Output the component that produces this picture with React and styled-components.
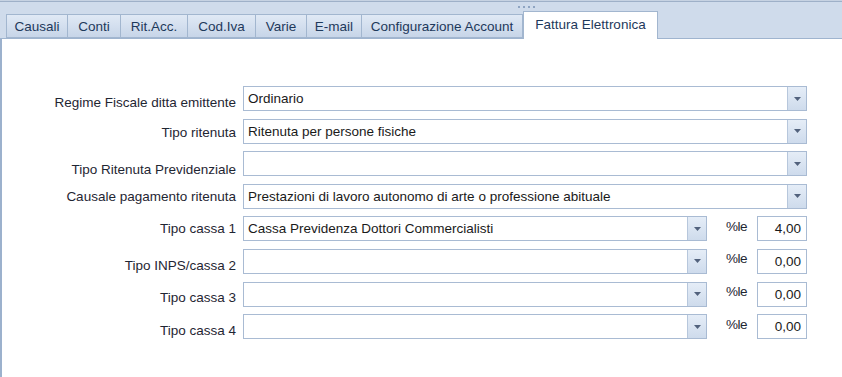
import React from "react";
import styled, { createGlobalStyle } from "styled-components";

const GlobalStyle = createGlobalStyle`
  html, body {
    margin: 0;
    padding: 0;
    background: #ffffff;
  }
  #root {
    height: 377px;
    overflow: hidden;
  }
`;

const Window = styled.div`
  height: 377px;
  display: flex;
  flex-direction: column;
  font-family: "Liberation Sans", Arial, sans-serif;
  font-size: 13.5px;
  color: #1f2633;
`;

const TabStrip = styled.div`
  position: relative;
  height: 39px;
  box-sizing: border-box;
  display: flex;
  align-items: flex-end;
  padding-left: 6px;
  background: #cfdbeb;
  border-bottom: 1px solid #9fb4cf;
  box-shadow: inset 0 1px #c6d2e2, inset 0 2px #9eb0c8;
`;

const Grip = styled.div`
  position: absolute;
  left: 518px;
  top: 6px;
  display: flex;
  gap: 3px;

  span {
    width: 2px;
    height: 2px;
    background: #8ea4c2;
  }
`;

const Tab = styled.div`
  box-sizing: border-box;
  width: ${(p) => p.$w}px;
  height: ${(p) => (p.$active ? 28 : 24)}px;
  margin-left: ${(p) => (p.$first || p.$active ? 0 : -1)}px;
  margin-bottom: ${(p) => (p.$active ? -1 : 0)}px;
  display: flex;
  align-items: center;
  justify-content: center;
  padding-top: ${(p) => (p.$active ? 0 : 1)}px;
  padding-bottom: ${(p) => (p.$active ? 3 : 0)}px;
  border: 1px solid #a2b6cf;
  border-bottom: ${(p) => (p.$active ? "none" : "1px solid #a2b6cf")};
  background: ${(p) =>
    p.$active ? "#ffffff" : "linear-gradient(#e0e9f5, #c7d5e8)"};
  color: #1e395b;
  white-space: nowrap;
  position: relative;
  z-index: ${(p) => (p.$active ? 2 : 1)};
`;

const Content = styled.div`
  flex: 1;
  background: #ffffff;
  border-left: 2px solid #9cb1cd;
  padding-top: 47px;
`;

const Form = styled.div`
  display: grid;
  grid-template-columns: 234px 564px;
  grid-auto-rows: 25px;
  column-gap: 7px;
  row-gap: 7.6px;
`;

const Label = styled.div`
  text-align: right;
  line-height: 16px;
  white-space: nowrap;
  padding-top: ${(p) => 4.5 + p.$drop}px;
  color: #1f2633;
`;

const Field = styled.div`
  display: flex;
  align-items: stretch;
  min-width: 0;
`;

const Combo = styled.div`
  box-sizing: border-box;
  width: ${(p) => (p.$w ? `${p.$w}px` : "100%")};
  height: 25px;
  display: flex;
  border: 1px solid #a9bbd3;
  background: #ffffff;
`;

const ComboText = styled.div`
  flex: 1;
  padding-left: 4px;
  line-height: 23px;
  white-space: nowrap;
  overflow: hidden;
  color: #1a1a1a;
`;

const DropButton = styled.div`
  width: 18px;
  display: flex;
  align-items: center;
  justify-content: center;
  border-left: 1px solid #b7c7dc;
  background: linear-gradient(#e5edf7, #cedbec);
`;

const Pct = styled.div`
  margin-left: 19px;
  width: 22px;
  line-height: 16px;
  padding-top: 2.5px;
  white-space: nowrap;
  letter-spacing: -0.5px;
  color: #1f2633;
`;

const NumberBox = styled.div`
  box-sizing: border-box;
  margin-left: auto;
  width: 50px;
  height: 25px;
  border: 1px solid #a9bbd3;
  padding-right: 5px;
  text-align: right;
  line-height: 23px;
  color: #1a1a1a;
`;

const Arrow = () => (
  <svg width="7" height="4" viewBox="0 0 7 4">
    <path d="M0 0h7L3.5 4z" fill="#52627d" />
  </svg>
);

const tabs = [
  { label: "Causali", w: 62 },
  { label: "Conti", w: 54 },
  { label: "Rit.Acc.", w: 68 },
  { label: "Cod.Iva", w: 69 },
  { label: "Varie", w: 52 },
  { label: "E-mail", w: 56 },
  { label: "Configurazione Account", w: 162 },
  { label: "Fattura Elettronica", w: 135, active: true },
];

const wideRows = [
  { label: "Regime Fiscale ditta emittente", value: "Ordinario", drop: 4 },
  { label: "Tipo ritenuta", value: "Ritenuta per persone fisiche", drop: 2 },
  { label: "Tipo Ritenuta Previdenziale", value: "", drop: 6 },
  {
    label: "Causale pagamento ritenuta",
    value: "Prestazioni di lavoro autonomo di arte o professione abituale",
    drop: 1,
  },
];

const cassaRows = [
  { label: "Tipo cassa 1", value: "Cassa Previdenza Dottori Commercialisti", pct: "4,00", drop: 0 },
  { label: "Tipo INPS/cassa 2", value: "", pct: "0,00", drop: 5 },
  { label: "Tipo cassa 3", value: "", pct: "0,00", drop: 4 },
  { label: "Tipo cassa 4", value: "", pct: "0,00", drop: 4 },
];

const App = () => {
  return (
    <Window>
      <GlobalStyle />
      <TabStrip>
        <Grip>
          <span />
          <span />
          <span />
          <span />
        </Grip>
        {tabs.map((t, i) => (
          <Tab key={t.label} $w={t.w} $first={i === 0} $active={t.active}>
            {t.label}
          </Tab>
        ))}
      </TabStrip>

      <Content>
        <Form>
          {wideRows.map((r) => (
            <React.Fragment key={r.label}>
              <Label $drop={r.drop}>{r.label}</Label>
              <Field>
                <Combo>
                  <ComboText>{r.value}</ComboText>
                  <DropButton>
                    <Arrow />
                  </DropButton>
                </Combo>
              </Field>
            </React.Fragment>
          ))}
          {cassaRows.map((r) => (
            <React.Fragment key={r.label}>
              <Label $drop={r.drop}>{r.label}</Label>
              <Field>
                <Combo $w={464}>
                  <ComboText>{r.value}</ComboText>
                  <DropButton>
                    <Arrow />
                  </DropButton>
                </Combo>
                <Pct>%le</Pct>
                <NumberBox>{r.pct}</NumberBox>
              </Field>
            </React.Fragment>
          ))}
        </Form>
      </Content>
    </Window>
  );
};

export default App;
